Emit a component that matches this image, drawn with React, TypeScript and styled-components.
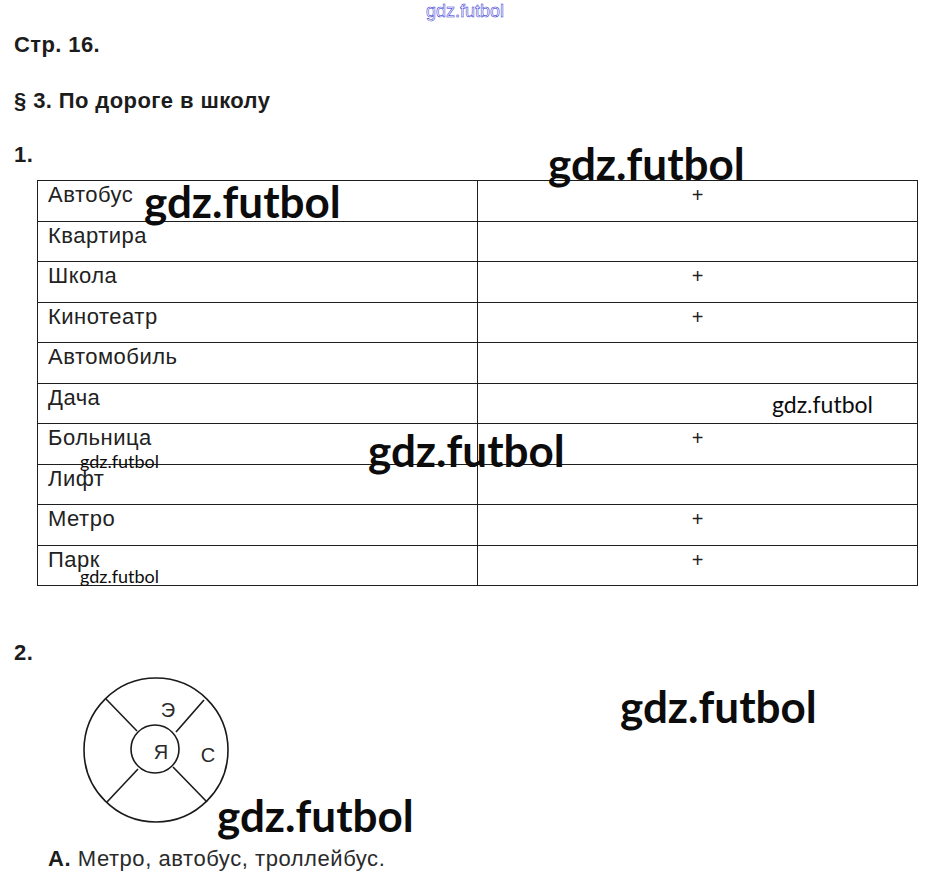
import React from "react";
import styled, { createGlobalStyle } from "styled-components";

const Global = createGlobalStyle`
  html, body { margin: 0; padding: 0; background: #ffffff; }
  body { font-family: "Liberation Sans", Arial, sans-serif; color: #222; }
`;

const Page = styled.div`
  position: relative;
  width: 931px;
  min-height: 892px;
  box-sizing: border-box;
  padding: 32px 14px 0 14px;
  display: flex;
  flex-direction: column;
  align-items: flex-start;
  overflow: hidden;
`;

const Header = styled.header`
  display: flex;
  flex-direction: column;
  gap: 31px;
`;

const Task = styled.section<{ $mt: number; $gap: number }>`
  display: flex;
  flex-direction: column;
  align-items: flex-start;
  gap: ${(p) => p.$gap}px;
  margin-top: ${(p) => p.$mt}px;
`;

const Heading = styled.div`
  font-family: "Liberation Sans", Arial, sans-serif;
  font-weight: 700;
  font-size: 22px;
  line-height: 25px;
  letter-spacing: 0.4px;
  color: #1c1c1c;
`;

const Table = styled.table`
  margin-left: 23px;
  border-collapse: collapse;
  width: 881px;
  table-layout: fixed;
`;

const Row = styled.tr`
  height: 40.5px;
`;

const NameCell = styled.td`
  width: 440px;
  border: 1px solid #1e1e1e;
  vertical-align: top;
  padding: 1px 10px;
  font-size: 22px;
  line-height: 25px;
  letter-spacing: 0.5px;
  color: #222;
  box-sizing: border-box;
`;

const MarkCell = styled.td`
  border: 1px solid #1e1e1e;
  vertical-align: top;
  text-align: center;
  padding: 3px 0 0 0;
  font-size: 20px;
  line-height: 23px;
  color: #222;
`;

const Diagram = styled.svg`
  display: block;
  margin-left: 66px;
`;

const Answer = styled.p`
  margin: 9px 0 0 34px;
  font-size: 22px;
  line-height: 25px;
  letter-spacing: 0.55px;
  color: #2a2a2a;
  b { font-weight: 700; color: #1c1c1c; }
`;

const TopMark = styled.div`
  position: absolute;
  left: 426px;
  top: 0px;
  font-family: "Liberation Sans", Arial, sans-serif;
  font-size: 18px;
  line-height: 22px;
  color: #ffffff;
  -webkit-text-stroke: 0.5px #2828d0;
`;

const Watermark = styled.div<{ $x: number; $y: number; $size: number }>`
  position: absolute;
  left: ${(p) => p.$x}px;
  top: ${(p) => p.$y}px;
  font-family: Lato, "Open Sans", sans-serif;
  font-weight: ${(p) => (p.$size > 30 ? 700 : 400)};
  font-size: ${(p) => p.$size}px;
  line-height: 1;
  color: #0c0c0c;
  white-space: nowrap;
`;

const rows: [string, boolean][] = [
  ["Автобус", true],
  ["Квартира", false],
  ["Школа", true],
  ["Кинотеатр", true],
  ["Автомобиль", false],
  ["Дача", false],
  ["Больница", true],
  ["Лифт", false],
  ["Метро", true],
  ["Парк", true],
];

const marks: [number, number, number][] = [
  [548, 141, 44],
  [144, 179, 44],
  [368, 428, 44],
  [620, 684, 44],
  [217, 793, 44],
  [772, 393, 23],
  [80, 452, 18],
  [80, 567, 18],
];

export default function App() {
  return (
    <>
      <Global />
      <Page>
        <TopMark>gdz.futbol</TopMark>
        <Header>
          <Heading>Стр. 16.</Heading>
          <Heading>§ 3. По дороге в школу</Heading>
        </Header>
        <Task $mt={29} $gap={13}>
          <Heading>1.</Heading>
          <Table>
            <tbody>
              {rows.map(([name, mark]) => (
                <Row key={name}>
                  <NameCell>{name}</NameCell>
                  <MarkCell>{mark ? "+" : ""}</MarkCell>
                </Row>
              ))}
            </tbody>
          </Table>
        </Task>
        <Task $mt={54} $gap={10}>
          <Heading>2.</Heading>
          <Diagram width="152" height="152" viewBox="0 0 152 152">
            <g fill="none" stroke="#1a1a1a" strokeWidth="1.6">
              <circle cx="76" cy="75" r="72" />
              <circle cx="75" cy="74" r="24" />
              <line x1="26" y1="24" x2="57" y2="56" />
              <line x1="124" y1="25" x2="96" y2="57" />
              <line x1="27" y1="127" x2="58" y2="94" />
              <line x1="127" y1="127" x2="93" y2="92" />
            </g>
            <g fontFamily="Liberation Sans, Arial, sans-serif" fontSize="20" fill="#2a2a2a" textAnchor="middle">
              <text x="88" y="42">Э</text>
              <text x="81" y="84">Я</text>
              <text x="128" y="87">С</text>
            </g>
          </Diagram>
          <Answer>
            <b>А.</b> Метро, автобус, троллейбус.
          </Answer>
        </Task>
        {marks.map(([x, y, s], i) => (
          <Watermark key={i} $x={x} $y={y} $size={s}>gdz.futbol</Watermark>
        ))}
      </Page>
    </>
  );
}
